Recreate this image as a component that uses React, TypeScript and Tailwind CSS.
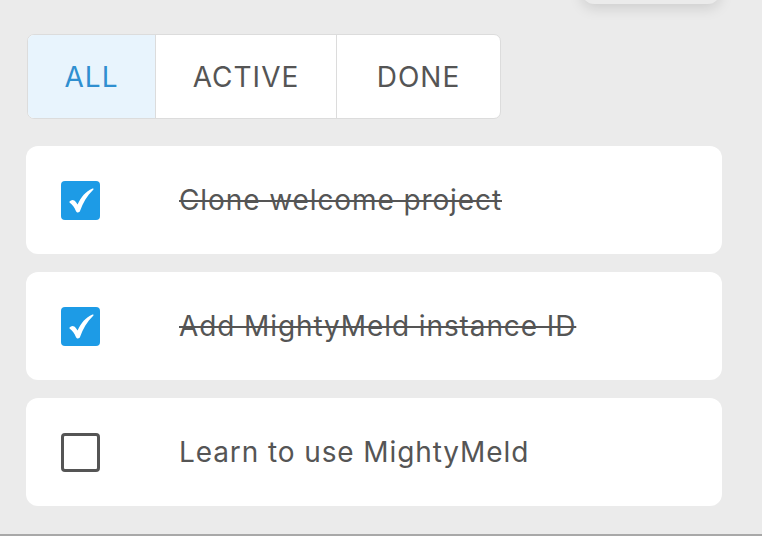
import React from "react";

const items = [
  { text: "Clone welcome project", done: true },
  { text: "Add MightyMeld instance ID", done: true },
  { text: "Learn to use MightyMeld", done: false },
];

function Check({ done }: { done: boolean }) {
  if (done) {
    return (
      <div className="w-[39px] h-[39px] rounded-[4px] bg-[#1d9be6] flex items-center justify-center shrink-0">
        <svg width="28" height="28" viewBox="0 0 28 28">
          <path
            d="M2.5 15.5 C4.5 13.3 7.2 13.5 9 16.3 L10.6 18.6 C14 11 18.5 5.5 25.5 2.5 C26.5 2.2 27 3 26 4 C20 9.5 16 16.5 13 25 C12.3 26.8 10 27 9 25.2 C7.5 21.5 5.5 18.5 2.5 16.5 Z"
            fill="white"
          />
        </svg>
      </div>
    );
  }
  return <div className="w-[39px] h-[39px] rounded-[4px] border-[3px] border-[#555555] bg-white shrink-0" />;
}

export default function App() {
  return (
    <div
      className="relative w-[762px] h-[536px] bg-[#ebebeb] overflow-hidden border-b-2 border-[#a8a8a8]"
      style={{ fontFamily: "Inter, 'Noto Sans', sans-serif" }}
    >
      <div className="absolute left-[582px] top-[-40px] w-[138px] h-[44px] rounded-[12px] bg-[#ebebeb] shadow-[0_4px_14px_rgba(0,0,0,0.13)]" />
      <div className="pt-[34px] pl-[27px]">
        <div className="flex w-[474px] h-[85px] rounded-[7px] border border-[#dcdcdc] bg-white overflow-hidden text-[28px] tracking-[1px] text-[#555555]">
          <div className="w-[128px] flex items-center justify-center bg-[#e8f4fd] text-[#2f8fd0] border-r border-[#dcdcdc]">ALL</div>
          <div className="w-[181px] flex items-center justify-center border-r border-[#dcdcdc]">ACTIVE</div>
          <div className="flex-1 flex items-center justify-center">DONE</div>
        </div>
      </div>
      <div className="flex flex-col gap-[18px] pl-[26px] pt-[27px] w-[722px]">
        {items.map((it) => (
          <div key={it.text} className="h-[108px] rounded-[12px] bg-white flex items-center pl-[35px]">
            <Check done={it.done} />
            <span className={"ml-[79px] text-[28px] tracking-[0.9px] text-[#555555] " + (it.done ? "line-through" : "")}>{it.text}</span>
          </div>
        ))}
      </div>
    </div>
  );
}
